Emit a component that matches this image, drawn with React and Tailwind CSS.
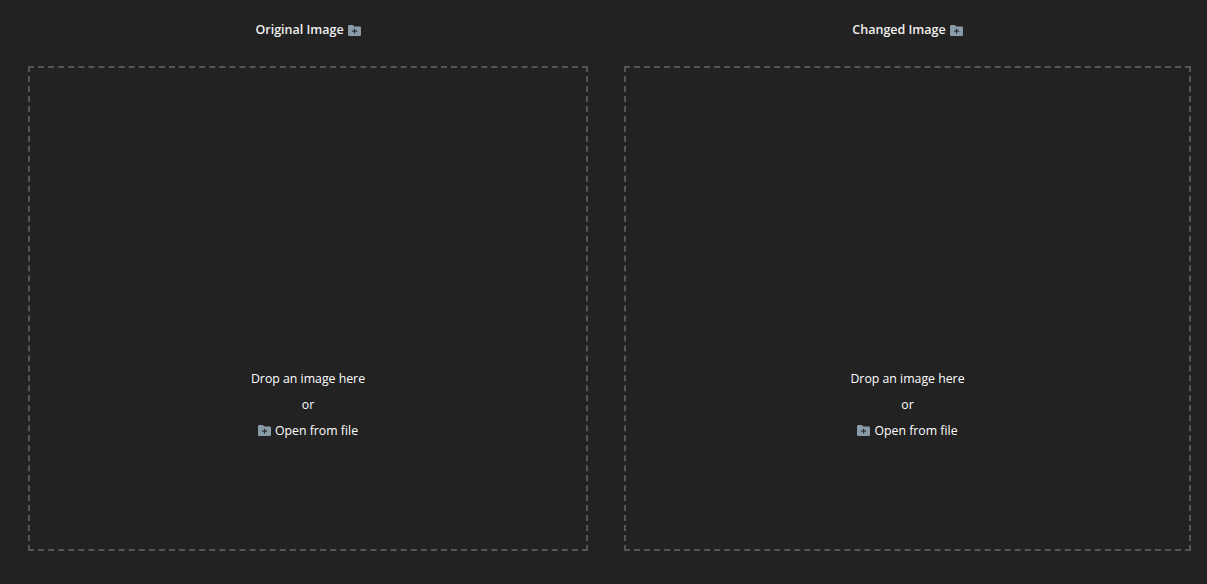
function FolderPlusIcon({ className = '' }) {
  return (
    <svg viewBox="0 0 13 11" className={`w-[13px] h-[11px] shrink-0 ${className}`}>
      <path
        d="M1.2 0H4.8L6.3 1.5H11.8A1.2 1.2 0 0 1 13 2.7V9.8A1.2 1.2 0 0 1 11.8 11H1.2A1.2 1.2 0 0 1 0 9.8V1.2A1.2 1.2 0 0 1 1.2 0Z"
        fill="#8a9ba8"
      />
      <path d="M6 3.8H7.2V5.6H9.1V6.8H7.2V8.6H6V6.8H4.1V5.6H6Z" fill="#2b3034" />
    </svg>
  );
}

function DropColumn({ title, width }) {
  return (
    <div className={`flex flex-col ${width}`}>
      <div className="h-[66px] pt-[21px] flex justify-center">
        <div className="flex items-center h-[18px] gap-1 text-[12.5px] font-semibold text-[#f0f0f0]">
          <span>{title}</span>
          <FolderPlusIcon />
        </div>
      </div>

      <div className="h-[485px] border-2 border-dashed border-[#555555] flex flex-col items-center pt-[298px] text-[12.3px] text-white">
        <div className="h-[26px] leading-[26px]">Drop an image here</div>
        <div className="h-[26px] leading-[26px]">or</div>
        <div className="h-[26px] flex items-center gap-1">
          <FolderPlusIcon className="-mt-[2px]" />
          <span>Open from file</span>
        </div>
      </div>
    </div>
  );
}

export default function App() {
  return (
    <div className="w-[1207px] h-[584px] overflow-hidden bg-[#222222] pl-7 font-['Open_Sans','Noto_Sans',sans-serif]">
      <div className="flex gap-9">
        <DropColumn title="Original Image" width="w-[560px]" />
        <DropColumn title="Changed Image" width="w-[567px]" />
      </div>
    </div>
  );
}
